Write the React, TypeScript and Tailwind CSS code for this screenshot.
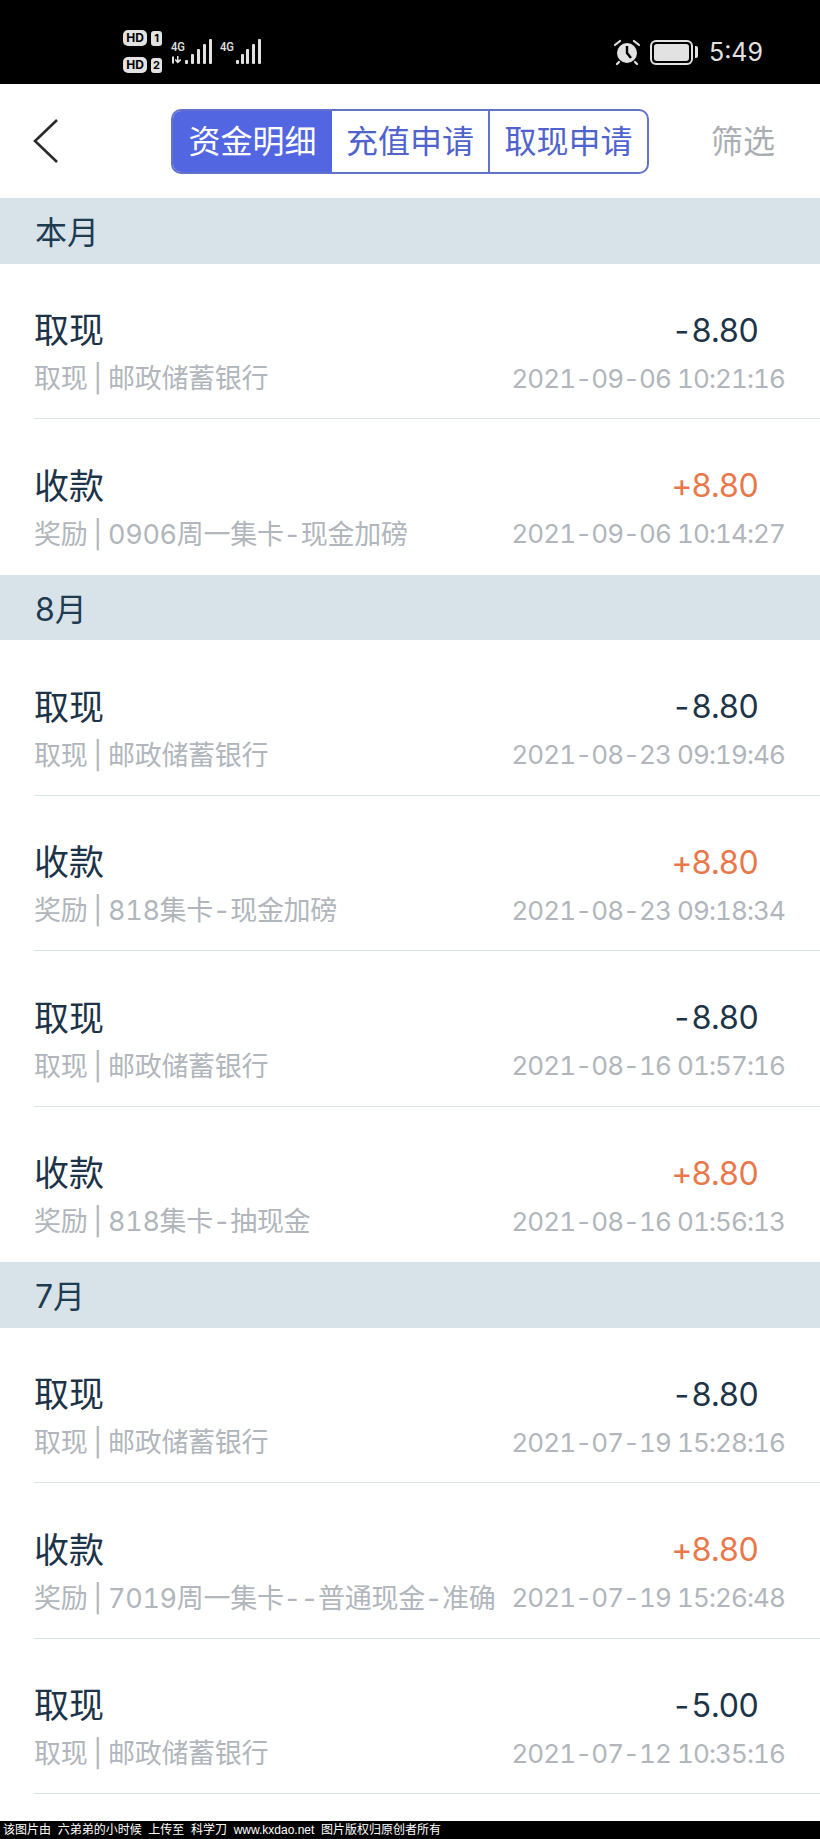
type Entry = {
  title: string;
  sub: string;
  amount: string;
  time: string;
};

type Section = {
  label: string;
  entries: Entry[];
};

const BANK = "取现 | 邮政储蓄银行";

const SECTIONS: Section[] = [
  {
    label: "本月",
    entries: [
      { title: "取现", sub: BANK, amount: "-8.80", time: "2021-09-06 10:21:16" },
      { title: "收款", sub: "奖励 | 0906周一集卡-现金加磅", amount: "+8.80", time: "2021-09-06 10:14:27" },
    ],
  },
  {
    label: "8月",
    entries: [
      { title: "取现", sub: BANK, amount: "-8.80", time: "2021-08-23 09:19:46" },
      { title: "收款", sub: "奖励 | 818集卡-现金加磅", amount: "+8.80", time: "2021-08-23 09:18:34" },
      { title: "取现", sub: BANK, amount: "-8.80", time: "2021-08-16 01:57:16" },
      { title: "收款", sub: "奖励 | 818集卡-抽现金", amount: "+8.80", time: "2021-08-16 01:56:13" },
    ],
  },
  {
    label: "7月",
    entries: [
      { title: "取现", sub: BANK, amount: "-8.80", time: "2021-07-19 15:28:16" },
      { title: "收款", sub: "奖励 | 7019周一集卡--普通现金-准确", amount: "+8.80", time: "2021-07-19 15:26:48" },
      { title: "取现", sub: BANK, amount: "-5.00", time: "2021-07-12 10:35:16" },
    ],
  },
];

function HdBadge({ n }: { n: string }) {
  return (
    <div className="flex items-center gap-[4px]">
      <span className="flex h-[16px] w-[24px] items-center justify-center rounded-[5px] bg-[#e2e2e2] text-[12px] font-bold leading-none text-black">
        HD
      </span>
      <span className="flex h-[15px] w-[11px] items-center justify-center rounded-[3px] bg-[#e2e2e2] text-[11px] font-bold leading-none text-black">
        {n}
      </span>
    </div>
  );
}

function Signal({ arrows }: { arrows: boolean }) {
  return (
    <svg width="42" height="26" viewBox="0 0 42 26" fill="#e2e2e2">
      <text x="0" y="13" fontSize="12" fontWeight="500" fontFamily="Roboto, sans-serif" textLength="14" lengthAdjust="spacingAndGlyphs">
        4G
      </text>
      {arrows && <path d="M1 18.500h2v7H1zM6 18h1.500v4l2.500-1v1.500l-3.300 3-2.700-3V21l2 1z" />}
      <rect x={arrows ? 14 : 16} y="22" width="3" height="4" rx="1" />
      <rect x={arrows ? 20 : 21} y="16" width="3" height="10" rx="1" />
      <rect x="26" y="11" width="3" height="15" rx="1" />
      <rect x="32" y="6" width="3" height="20" rx="1" />
      <rect x="38" y="1" width="3" height="25" rx="1" />
    </svg>
  );
}

function AlarmIcon() {
  return (
    <svg width="28" height="26" viewBox="0 0 28 26">
      <circle cx="14" cy="14" r="10" fill="#e2e2e2" />
      <path d="M14 7v7l4 5" stroke="#000" strokeWidth="2.400" fill="none" />
      <path d="M2 6l5-4M26 6l-5-4M6 23l-2 2M22 23l2 2" stroke="#e2e2e2" strokeWidth="2.200" strokeLinecap="round" />
    </svg>
  );
}

function StatusBar() {
  return (
    <div className="flex h-[84px] items-start bg-black pl-[123px] pr-[57px]">
      <div className="mt-[30px] flex flex-col gap-[11px]">
        <HdBadge n="1" />
        <HdBadge n="2" />
      </div>
      <div className="ml-[9px] mt-[38px] flex gap-[7px]">
        <Signal arrows />
        <Signal arrows={false} />
      </div>
      <div className="ml-auto mt-[39px] flex items-center">
        <AlarmIcon />
        <div className="ml-[9px] flex items-center gap-[2px]">
          <div className="h-[25px] w-[43px] rounded-[6px] border-2 border-[#e2e2e2] p-[2px]">
            <div className="h-full w-full rounded-[3px] bg-[#e2e2e2]" />
          </div>
          <div className="h-[12px] w-[3px] rounded-r-[2px] bg-[#e2e2e2]" />
        </div>
        <span className="ml-[11px] text-[25px] leading-none text-[#e2e2e2]">5:49</span>
      </div>
    </div>
  );
}

function NavBar() {
  return (
    <div className="flex h-[114px] items-center bg-white pl-[33px]">
      <svg width="26" height="46" viewBox="0 0 26 46" fill="none" stroke="#2a2a2a" strokeWidth="2.600">
        <path d="M24 2L2 23l22 21" />
      </svg>
      <div className="ml-[112px] flex h-[65px] w-[478px] overflow-hidden rounded-[10px] border-2 border-[#6273c9] text-[32px] leading-none text-[#5063cc]">
        <div className="flex w-[159px] items-center justify-center bg-[#5266e2] pt-[2px] text-white">资金明细</div>
        <div className="flex w-[158px] items-center justify-center border-r-2 border-[#6273c9] pt-[2px]">充值申请</div>
        <div className="flex flex-1 items-center justify-center pt-[2px]">取现申请</div>
      </div>
      <span className="ml-[62px] pt-[2px] text-[32px] leading-none text-[#a9aeb3]">筛选</span>
    </div>
  );
}

function Row({ entry, divided }: { entry: Entry; divided: boolean }) {
  const positive = entry.amount.startsWith("+");
  return (
    <div className={`ml-[34px] h-[155.500px] pt-[47px] ${divided ? "border-b border-[#dce5e8]" : ""}`}>
      <div className="flex h-[40px] items-center justify-between pr-[62px] leading-none text-[#1c3348]">
        <span className="text-[35px]">{entry.title}</span>
        <span className={`text-[32px] tabular-nums tracking-[-1px] ${positive ? "text-[#e8784a]" : ""}`}>{entry.amount}</span>
      </div>
      <div className="mt-[8px] flex h-[40px] items-center justify-between pr-[35px] leading-none text-[#b0b6bc]">
        <span className="whitespace-nowrap text-[27px] tabular-nums tracking-[-0.3px] [word-spacing:-1px]">{entry.sub}</span>
        <span className="whitespace-nowrap text-[26px] tabular-nums tracking-[-0.9px]">{entry.time}</span>
      </div>
    </div>
  );
}

export default function App() {
  return (
    <div className="flex h-[1839px] w-[820px] flex-col overflow-hidden bg-white font-['Inter','Noto_Sans_CJK_SC',sans-serif]">
      <StatusBar />
      <NavBar />
      <div className="flex-1">
        {SECTIONS.map((s, i) => (
          <section key={s.label}>
            <div className="flex h-[65.500px] items-center bg-[#d8e2e9] pl-[35px] pt-[5px] text-[32px] leading-none text-[#1f3b50]">
              {s.label}
            </div>
            {s.entries.map((e, j) => (
              <Row
                key={`${i}-${j}`}
                entry={e}
                divided={j < s.entries.length - 1 || i === SECTIONS.length - 1}
              />
            ))}
          </section>
        ))}
      </div>
      <div className="flex h-[18px] items-center bg-black pl-[3px] font-['Liberation_Sans','Noto_Sans_CJK_SC',sans-serif] text-[12px] leading-none text-white">
        该图片由&nbsp;&nbsp;六弟弟的小时候&nbsp;&nbsp;上传至&nbsp;&nbsp;科学刀&nbsp;&nbsp;www.kxdao.net&nbsp;&nbsp;图片版权归原创者所有
      </div>
    </div>
  );
}
